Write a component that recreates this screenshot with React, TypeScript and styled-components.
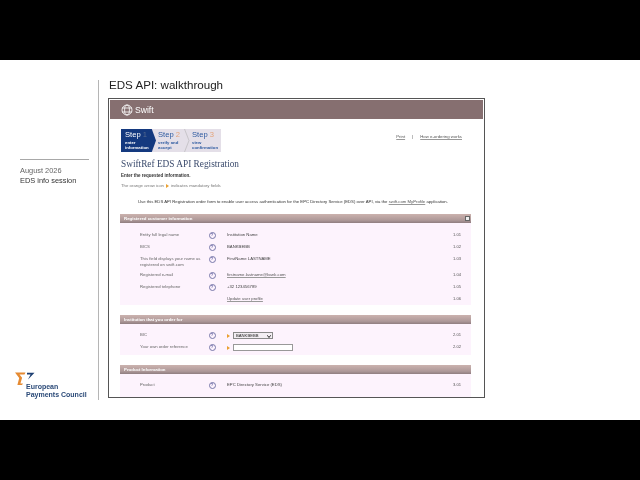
import React from "react";
import styled, { createGlobalStyle } from "styled-components";

const Global = createGlobalStyle`
  html, body { margin: 0; padding: 0; background: #fff; }
  body { font-family: "Liberation Sans", Arial, sans-serif; }
`;
const Page = styled.div`width: 640px; height: 480px; display: flex; flex-direction: column; overflow: hidden;`;
const BlackBar = styled.div`height: 60px; background: #000; flex: none;`;
const Slide = styled.div`height: 360px; background: #fff; display: flex; flex: none; color: #222; filter: blur(0.3px);`;
const Side = styled.aside`width: 99px; flex: none; display: flex; flex-direction: column; padding: 79px 0 0 0; box-sizing: border-box; height: 320px; margin-top: 20px; border-right: 1px solid #b5b5b5;`;
const SideRule = styled.div`width: 69px; height: 1px; background: #a8a8a8; margin-left: 20px;`;
const SideDate = styled.div`margin: 6px 0 0 20px; font-size: 7.4px; line-height: 9.5px; color: #666;`;
const SideName = styled.div`margin-left: 20px; font-size: 7.4px; line-height: 9.5px; color: #333;`;
const Logo = styled.div`margin: auto 0 2px 15px; display: flex; flex-direction: column;`;
const LogoMark = styled.svg`display: block;`;
const LogoText = styled.div`margin: -2px 0 0 11px; font-size: 7px; line-height: 7.5px; font-weight: 700; color: #2b4a78; white-space: nowrap;`;
const Main = styled.main`flex: 1; padding: 18px 0 0 9px; min-width: 0;`;
const Title = styled.h1`margin: 0 0 0 1px; font-size: 11.6px; line-height: 14px; font-weight: 400; color: #222; height: 20px;`;
const Shot = styled.div`width: 377px; height: 300px; box-sizing: border-box; border: 1px solid #555; padding: 1px; overflow: hidden; filter: blur(0.25px); background: #fff;`;
const Brand = styled.div`height: 19px; background: #866f70; display: flex; align-items: center; gap: 2px; padding-left: 11px; color: #fff; font-size: 8.6px; font-weight: 400;`;
const Body = styled.div`padding: 0 12px 0 10px;`;
const TopRow = styled.div`display: flex; justify-content: space-between; align-items: flex-start; padding: 10px 1px 0 1px; height: 23px;`;
const Steps = styled.div`display: flex; width: 100px; height: 23px; background: #e4dfe8; position: relative;`;
const Step = styled.div<{ $active?: boolean; $w: number }>`
  width: ${(p) => p.$w}px; box-sizing: border-box; padding: 1px 0 0 ${(p) => (p.$active ? 4 : 2)}px;
  color: ${(p) => (p.$active ? "#fff" : "#2d5aa0")};
  background: ${(p) => (p.$active ? "#14397f" : "transparent")};
  clip-path: ${(p) => (p.$active ? "polygon(0 0, 88% 0, 100% 50%, 88% 100%, 0 100%)" : "none")};
`;
const Chevron = styled.svg`position: absolute; left: 63px; top: 0;`;
const StepHead = styled.div`font-size: 7.6px; line-height: 9px; white-space: nowrap;`;
const StepNum = styled.span<{ $active?: boolean }>`color: ${(p) => (p.$active ? "#54698f" : "#e4a37a")};`;
const StepSub = styled.div`font-size: 4.3px; line-height: 4.8px; font-weight: 700; margin-top: 2px; white-space: nowrap;`;
const TopLinks = styled.div`display: flex; gap: 7px; font-size: 4.3px; color: #444; padding: 5px 8px 0 0;`;
const LinkText = styled.span`text-decoration: underline; text-decoration-thickness: 0.3px; text-decoration-color: #999; color: #555;`;
const H2 = styled.h2`margin: 6px 0 0 1px; font: 400 9.3px/12px "Liberation Serif", serif; color: #3a4a6c;`;
const Enter = styled.div`margin: 3px 0 0 1px; font-size: 4.5px; line-height: 5px; font-weight: 700; color: #333;`;
const Mandatory = styled.div`margin: 5px 0 0 1px; font-size: 4.3px; line-height: 5px; font-weight: 400; color: #777; display: flex; align-items: center; gap: 2px;`;
const Intro = styled.div`margin: 11px 0 0 18px; font-size: 4.25px; line-height: 5px; color: #333; white-space: nowrap;`;
const Section = styled.section<{ $mt: number; $h: number }>`margin-top: ${(p) => p.$mt}px; height: ${(p) => p.$h}px; background: #fdf3fd; position: relative;`;
const SecHead = styled.div<{ $gap: number }>`height: 9px; margin-bottom: ${(p) => p.$gap}px; padding-left: 4px; background: linear-gradient(#cbb2ae, #ad9898 70%, #8f7d80); color: #fff; font-size: 4.35px; line-height: 9px; font-weight: 700; display: flex; justify-content: space-between; align-items: center;`;
const Plus = styled.span`width: 3px; height: 3px; border: 1px solid #666; background: #eee; margin-right: 1px;`;
const Row = styled.div<{ $h: number }>`display: grid; grid-template-columns: 68px 19px 226px 20px; padding-left: 20px; height: ${(p) => p.$h}px; font-size: 4.25px; line-height: 6px; color: #666; align-items: start;`;
const Help = styled.span`width: 5px; height: 5px; border: 1px solid #7777aa; border-radius: 50%; font-size: 3.4px; line-height: 5px; text-align: center; color: #444490; font-weight: 700; margin-left: 0.5px;`;
const Value = styled.span`color: #444; display: flex; align-items: center; gap: 3px;`;
const Num = styled.span`color: #555; font-size: 4.1px;`;
const Sel = styled.span`width: 36px; height: 5px; border: 1px solid #888; background: #f3eef3; font-size: 4.2px; line-height: 5px; padding-left: 2px; color: #222; display: flex; justify-content: space-between; box-sizing: content-box;`;
const SelArrow = styled.svg`margin: 1.5px 1px 0 0;`;
const Inp = styled.span`width: 58px; height: 5px; border: 1px solid #999; background: #fff;`;
const Arrow = styled.span`width: 0; height: 0; border-left: 3.5px solid #eaa030; border-top: 2px solid transparent; border-bottom: 2px solid transparent; display: inline-block;`;

const rows1: [string, string, string, number, boolean?][] = [
  ["Entity full legal name", "Institution Name", "1.01", 12],
  ["BICS", "BANKBEBB", "1.02", 12],
  ["This field displays your name as registered on swift.com", "FirstName LASTNAME", "1.03", 16],
  ["Registered e-mail", "firstname.lastname@bank.com", "1.04", 12, true],
  ["Registered telephone", "+32 123456789", "1.05", 12],
  ["", "Update user profile", "1.06", 12, true],
];

export default function App() {
  return (
    <Page>
      <Global />
      <BlackBar />
      <Slide>
        <Side>
          <SideRule />
          <SideDate>August 2026</SideDate>
          <SideName>EDS info session</SideName>
          <Logo>
            <LogoMark width="20" height="13" viewBox="0 0 20 13">
              <path d="M0 0.5h10.5l-1 2H4.5l2.6 3.2L5.4 11.5H8L7 13H2.4L4.2 6z" fill="#e58a32" />
              <path d="M12 0.8h7.5L13 7.5 15.6 2.4H12z" fill="#1d3f72" />
            </LogoMark>
            <LogoText>European<br />Payments Council</LogoText>
          </Logo>
        </Side>
        <Main>
          <Title>EDS API: walkthrough</Title>
          <Shot>
            <Brand>
              <svg width="12" height="12" viewBox="0 0 12 12" fill="none" stroke="#fff" strokeWidth="0.8">
                <circle cx="6" cy="6" r="5" />
                <ellipse cx="6" cy="6" rx="2.4" ry="5" />
                <path d="M1 4h10M1 8h10" />
              </svg>
              Swift
            </Brand>
            <Body>
              <TopRow>
                <Steps>
                  <Step $active $w={35}>
                    <StepHead>Step <StepNum $active>1</StepNum></StepHead>
                    <StepSub>enter<br />information</StepSub>
                  </Step>
                  <Step $w={34}>
                    <StepHead>Step <StepNum>2</StepNum></StepHead>
                    <StepSub>verify and<br />accept</StepSub>
                  </Step>
                  <Step $w={31}>
                    <StepHead>Step <StepNum>3</StepNum></StepHead>
                    <StepSub>view<br />confirmation</StepSub>
                  </Step>
                  <Chevron width="6" height="23" viewBox="0 0 6 23" fill="none" stroke="#aaa" strokeWidth="0.5">
                    <path d="M0.5 0L5 11.5 0.5 23" />
                  </Chevron>
                </Steps>
                <TopLinks>
                  <LinkText>Print</LinkText>
                  <span>|</span>
                  <LinkText>How e-ordering works</LinkText>
                </TopLinks>
              </TopRow>
              <H2>SwiftRef EDS API Registration</H2>
              <Enter>Enter the requested information.</Enter>
              <Mandatory>The orange arrow icon <Arrow /> indicates mandatory fields</Mandatory>
              <Intro>
                Use this EDS API Registration order form to enable user access authentication for the EPC Directory Service (EDS) over API, via the <LinkText>swift.com MyProfile</LinkText> application.
              </Intro>
              <Section $mt={10} $h={91}>
                <SecHead $gap={9}>Registered customer information<Plus /></SecHead>
                {rows1.map(([l, v, n, h, u]) => (
                  <Row key={n} $h={h}>
                    <span>{l}</span>
                    {l ? <Help>?</Help> : <span />}
                    <Value>{u ? <LinkText>{v}</LinkText> : v}</Value>
                    <Num>{n}</Num>
                  </Row>
                ))}
              </Section>
              <Section $mt={10} $h={40}>
                <SecHead $gap={8}>Institution that you order for</SecHead>
                <Row $h={12}>
                  <span>BIC</span><Help>?</Help>
                  <Value><Arrow /><Sel>BANKBEBB<SelArrow width="4" height="3" viewBox="0 0 4 3"><path d="M0.3 0.3L2 2.5 3.7 0.3" fill="none" stroke="#111" strokeWidth="0.9" /></SelArrow></Sel></Value>
                  <Num>2.01</Num>
                </Row>
                <Row $h={12}>
                  <span>Your own order reference</span><Help>?</Help>
                  <Value><Arrow /><Inp /></Value>
                  <Num>2.02</Num>
                </Row>
              </Section>
              <Section $mt={10} $h={40}>
                <SecHead $gap={8}>Product Information</SecHead>
                <Row $h={12}>
                  <span>Product</span><Help>?</Help>
                  <Value>EPC Directory Service (EDS)</Value>
                  <Num>3.01</Num>
                </Row>
              </Section>
            </Body>
          </Shot>
        </Main>
      </Slide>
      <BlackBar />
    </Page>
  );
}
